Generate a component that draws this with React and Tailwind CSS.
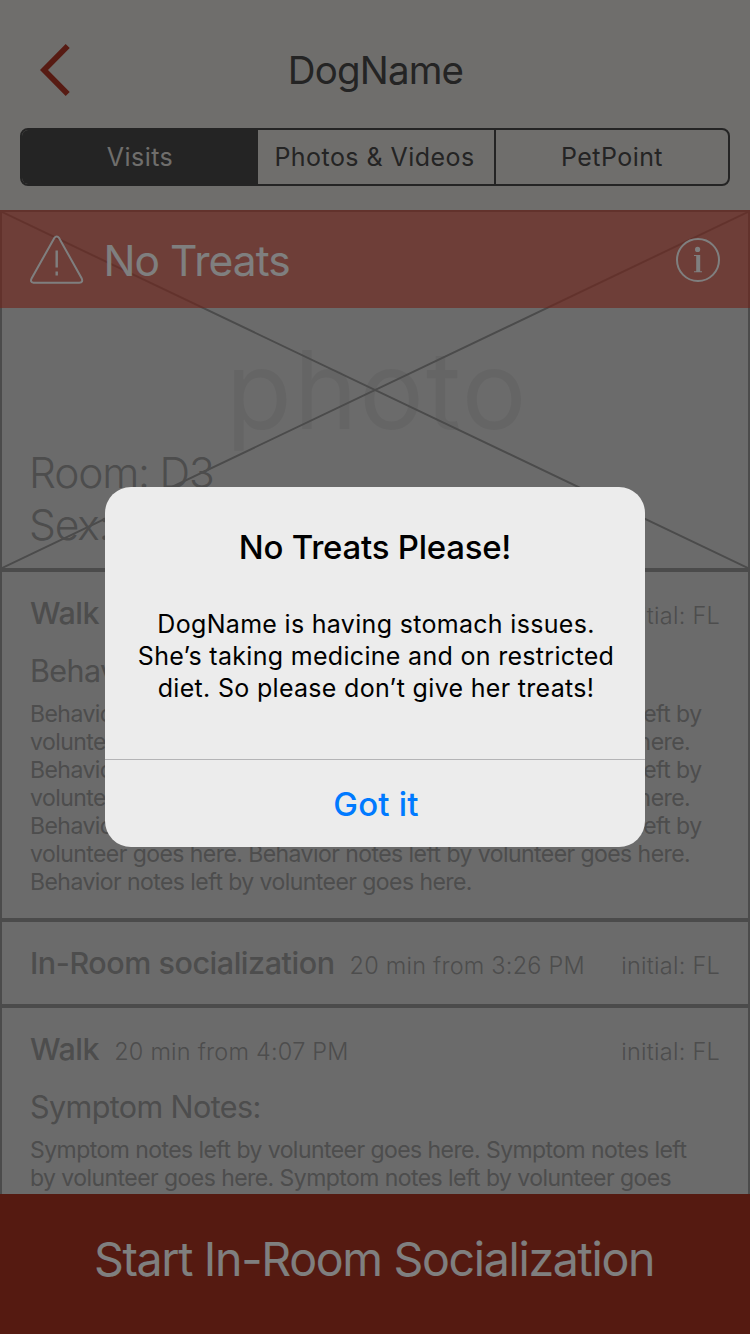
const BEHAVIOR_NOTES = [
  "Behavior notes left by volunteer goes here. Behavior notes left by",
  "volunteer goes here. Behavior notes left by volunteer goes here.",
  "Behavior notes left by volunteer goes here. Behavior notes left by",
  "volunteer goes here. Behavior notes left by volunteer goes here.",
  "Behavior notes left by volunteer goes here. Behavior notes left by",
  "volunteer goes here. Behavior notes left by volunteer goes here.",
  "Behavior notes left by volunteer goes here.",
];

const SYMPTOM_NOTES = [
  "Symptom notes left by volunteer goes here. Symptom notes left",
  "by volunteer goes here. Symptom notes left by volunteer goes",
];

function Header() {
  return (
    <header className="h-[210px] shrink-0 bg-[#dfddd8] px-5 pt-10 text-[#484848]">
      <div className="grid h-[60px] grid-cols-[60px_1fr_60px] items-center">
        <svg className="ml-5 h-[60px] w-[32px]" viewBox="40 40 32 60" fill="none">
          <path d="M67.7 46 L44 70 L67.7 94" stroke="#ae3627" strokeWidth="5.7" />
        </svg>
        <h1 className="pl-px text-center text-[38.5px] leading-[60px] tracking-[-0.85px]">DogName</h1>
      </div>
      <nav className="mt-7 flex h-[58px] overflow-hidden rounded-lg border-2 border-[#484848] text-[25px] leading-[54px] tracking-[0.45px]">
        <span className="w-[236px] bg-[#484848] text-center text-[#dfddd8]">Visits</span>
        <span className="w-[238px] border-r-2 border-[#484848] pr-[3px] text-center">Photos &amp; Videos</span>
        <span className="flex-1 text-center">PetPoint</span>
      </nav>
    </header>
  );
}

function Photo() {
  return (
    <section className="relative h-[360px] shrink-0 border-2 border-[#969696] text-[#9a9a9a]">
      <span className="absolute inset-x-0 top-[108px] pl-1 text-center text-[108px] leading-[140px] tracking-[1.7px] text-[#cbcbcb]">photo</span>
      <svg className="absolute inset-0 h-[356px] w-[746px]" viewBox="0 0 746 356" fill="none" stroke="#969696" strokeWidth="2">
        <path d="M0 0 L746 356 M746 0 L0 356" />
      </svg>
      <div className="absolute -inset-x-0.5 -top-0.5 flex h-[98px] items-center bg-[#df4b39]/65 px-[29px] pt-0.5 text-white">
        <svg className="h-[50px] w-[56px]" viewBox="0 0 56 50" fill="none" stroke="currentColor" strokeWidth="2">
          <path d="M25.2 3.2 L2.7 43.2 Q0.7 47.5 4.5 47.7 H50.3 Q54.5 47.5 52.6 43.2 L30.2 3.2 Q27.7 -0.2 25.2 3.2 Z" />
          <path d="M27.7 15.5 V32.5 M27.7 36.5 V40.5" strokeWidth="2.4" />
        </svg>
        <span className="ml-[18.5px] flex-1 pt-0.5 text-[42.5px] leading-[60px] tracking-[-0.95px]">No Treats</span>
        <svg className="h-[46px] w-[46px]" viewBox="0 0 46 46" fill="none">
          <circle cx="23" cy="23" r="21" stroke="currentColor" strokeWidth="2" />
          <circle cx="22.6" cy="12.4" r="2.6" fill="currentColor" />
          <path d="M19 18 H25.2 V34.2 H27 V35.2 H19 V34.2 H21.2 V19 H19 Z" fill="currentColor" />
        </svg>
      </div>
      <div className="absolute top-[235px] left-[27px] text-[42.5px] leading-[52px] font-light tracking-[-1.2px] whitespace-nowrap">
        <p>Room: D3</p>
        <p>Sex: F</p>
      </div>
    </section>
  );
}

function Visit({ kind, time, title, lines, className }) {
  return (
    <section className={"shrink-0 border-2 border-[#969696] px-7 pt-[21px] text-[#9a9a9a] " + className}>
      <div className="flex items-baseline leading-[40px] whitespace-nowrap">
        <h2 className="text-[30.5px] font-medium tracking-[-0.46px]">{kind}</h2>
        <span className="ml-[15px] text-[23.5px] font-light tracking-[0.22px]">{time}</span>
        <span className="ml-auto text-[23.5px] font-light tracking-[0.25px]">initial: FL</span>
      </div>
      {title && <h3 className="mt-[15px] text-[30.5px] leading-[40px] tracking-[-0.6px]">{title}</h3>}
      {lines && (
        <div className="mt-[9px] text-[23px] leading-[28px] tracking-[-0.56px] whitespace-nowrap">
          {lines.map((line, i) => (
            <p key={i}>{line}</p>
          ))}
        </div>
      )}
    </section>
  );
}

function Alert() {
  return (
    <div className="h-[360px] w-[540px] overflow-hidden rounded-[26px] bg-[#ececec] text-center text-black">
      <div className="h-[272px] pt-10">
        <h2 className="text-[33px] leading-[40px] font-medium tracking-[-0.25px]">No Treats Please!</h2>
        <div className="mt-[41px] pl-0.5 text-[25px] leading-[32px] tracking-[0.31px] whitespace-nowrap">
          <p>DogName is having stomach issues.</p>
          <p>She’s taking medicine and on restricted</p>
          <p>diet. So please don’t give her treats!</p>
        </div>
      </div>
      <button className="block h-[88px] w-full border-t border-[#b4b4b6] pt-px pl-0.5 text-[33px] leading-[87px] font-[450] tracking-[0.2px] text-[#007aff]">Got it</button>
    </div>
  );
}

export default function App() {
  return (
    <div className="relative flex h-[1334px] w-[750px] flex-col overflow-hidden bg-[#d7d7d7] font-['Inter',sans-serif]">
      <Header />
      <main className="flex min-h-0 flex-1 flex-col overflow-hidden">
        <Photo />
        <Visit className="h-[350px]" kind="Walk" time="20 min from 3:02 PM" title="Behavior Notes:" lines={BEHAVIOR_NOTES} />
        <Visit className="h-[86px]" kind="In-Room socialization" time="20 min from 3:26 PM" />
        <Visit className="h-[300px]" kind="Walk" time="20 min from 4:07 PM" title="Symptom Notes:" lines={SYMPTOM_NOTES} />
      </main>
      <footer className="h-[140px] shrink-0 bg-[#aa3422] pr-0.5 text-center text-[46.5px] leading-[131px] tracking-[-1.32px] text-white">
        Start In-Room Socialization
      </footer>
      <div className="absolute inset-0 flex items-center justify-center bg-black/50">
        <Alert />
      </div>
    </div>
  );
}
